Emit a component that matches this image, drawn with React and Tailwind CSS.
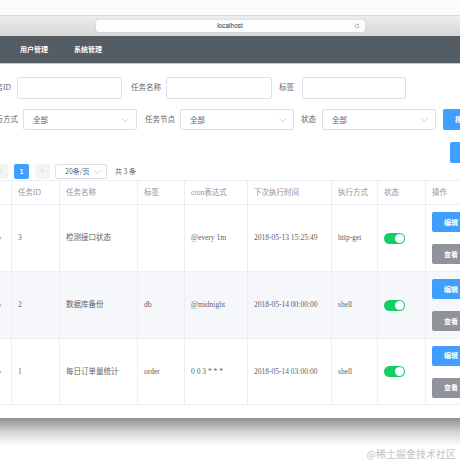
import React from 'react';

const serif = "font-['Liberation_Serif','Noto_Sans_CJK_SC',serif]";
const sans = "font-['Noto_Sans_CJK_SC','Liberation_Sans',sans-serif]";

const rows = [
    { id: '3', name: '检测接口状态', tag: '', cron: '@every 1m', next: '2018-05-13 15:25:49', mode: 'http-get' },
    { id: '2', name: '数据库备份', tag: 'db', cron: '@midnight', next: '2018-05-14 00:00:00', mode: 'shell' },
    { id: '1', name: '每日订单量统计', tag: 'order', cron: '0 0 3 * * *', next: '2018-05-14 03:00:00', mode: 'shell' },
];

function Chevron() {
    return (
        <svg width="7" height="4" viewBox="0 0 7 4" className="shrink-0">
            <path d="M0.5 0.5L3.5 3.5L6.5 0.5" fill="none" stroke="#c0c4cc" strokeWidth="0.8" />
        </svg>
    );
}

function Select({ className = '' }) {
    return (
        <div className={"h-[21px] w-[114px] border border-[#dcdfe6] rounded-[2px] bg-white flex items-center justify-between pl-[9px] pr-[7px] text-[#606266] " + className}>
            <span className={sans + " text-[7.5px]"}>全部</span>
            <Chevron />
        </div>
    );
}

function Cell({ w, children, className = '' }) {
    return (
        <div className={"shrink-0 h-full border-r border-[#ebeef5] flex items-center px-[6px] " + className} style={{ width: w }}>
            {children}
        </div>
    );
}

function Switch() {
    return (
        <div className="w-[21px] h-[11px] rounded-full bg-[#13ce66] flex items-center justify-end pr-[1px]">
            <div className="w-[9px] h-[9px] rounded-full bg-white" />
        </div>
    );
}

export default function App() {
    const cols = [24, 48, 78, 47, 63, 84, 46, 48, 80];

    return (
        <div className={"w-[460px] h-[460px] bg-white overflow-hidden " + serif}>
            {/* window top */}
            <div className="h-[15px] bg-[#fbfbfb]" />
            <div className="h-[21px] border-t border-[#d8d8d8] bg-gradient-to-b from-[#ededed] to-[#d7d7d7] flex items-start justify-center pt-[4px]">
                <div className="w-[269px] h-[12px] bg-[#fdfdfd] rounded-[2px] shadow-[0_0_1px_rgba(0,0,0,0.3)] relative flex items-center justify-center">
                    <span className="font-['Liberation_Sans',sans-serif] text-[6.5px] text-[#333] font-medium">localhost</span>
                    <svg width="6" height="6" viewBox="0 0 10 10" className="absolute right-[5px] top-[3px]">
                        <path d="M8 5a3 3 0 1 1-1-2.2" fill="none" stroke="#888" strokeWidth="1" />
                        <path d="M7.4 1.2v2h-2" fill="none" stroke="#888" strokeWidth="1" />
                    </svg>
                </div>
            </div>

            {/* page */}
            <div className="w-[460px] overflow-hidden">
                <div className="w-[560px] ml-[-12px]">
                    {/* nav */}
                    <div className="h-[28px] bg-[#545c64] border-b border-[#c8c8c8] flex items-center pl-[32px] gap-[26px]">
                        <span className={sans + " text-[7px] font-bold text-white"}>用户管理</span>
                        <span className={sans + " text-[7px] font-bold text-white"}>系统管理</span>
                    </div>

                    {/* filter form */}
                    <div className="pt-[13px] text-[7.5px] text-[#606266]">
                        <div className="flex items-center h-[22px]">
                            <span className="w-[23px]">任务ID</span>
                            <div className="ml-[6px] w-[105px] h-[22px] border border-[#dcdfe6] rounded-[2px]" />
                            <span className="ml-[9px]">任务名称</span>
                            <div className="ml-[5px] w-[106px] h-[22px] border border-[#dcdfe6] rounded-[2px]" />
                            <span className="ml-[7px]">标签</span>
                            <div className="ml-[8px] w-[104px] h-[22px] border border-[#dcdfe6] rounded-[2px]" />
                        </div>
                        <div className="flex items-center h-[21px] mt-[10px]">
                            <span className="w-[30px]">执行方式</span>
                            <Select className="ml-[5px]" />
                            <span className="ml-[8px]">任务节点</span>
                            <Select className="ml-[5px]" />
                            <span className="ml-[7px]">状态</span>
                            <Select className="ml-[6px]" />
                            <div className="ml-[7px] h-[21px] w-[38px] rounded-[2px] bg-[#409eff] flex items-center justify-center">
                                <span className={sans + " text-[7px] font-bold text-white"}>搜索</span>
                            </div>
                        </div>
                        <div className="flex h-[21px] mt-[12px]">
                            <div className="ml-[462px] w-[38px] h-[21px] rounded-[2px] bg-[#409eff] flex items-center justify-center">
                                <span className={sans + " text-[7px] font-bold text-white"}>新增</span>
                            </div>
                        </div>
                    </div>

                    {/* pagination */}
                    <div className="flex items-center h-[15px] mt-[1px] ml-[5px] text-[7.5px] text-[#606266]">
                        <div className="w-[15px] h-[15px] bg-[#f4f4f5] rounded-[2px] flex items-center justify-center text-[#c0c4cc] text-[6px]">&lt;</div>
                        <div className="ml-[6px] w-[15px] h-[15px] bg-[#409eff] rounded-[2px] flex items-center justify-center text-white text-[6.5px] font-bold font-['Liberation_Sans',sans-serif]">1</div>
                        <div className="ml-[6px] w-[15px] h-[15px] bg-[#f4f4f5] rounded-[2px] flex items-center justify-center text-[#c0c4cc] text-[6px]">&gt;</div>
                        <div className="ml-[5px] w-[52px] h-[15px] border border-[#dcdfe6] rounded-[2px] flex items-center justify-between pl-[9px] pr-[5px]">
                            <span className={sans + " text-[7px]"}>20条/页</span>
                            <Chevron />
                        </div>
                        <span className={sans + " ml-[8px] text-[7px]"}>共 3 条</span>
                    </div>

                    {/* table */}
                    <div className="mt-[1px] text-[7.5px]">
                        <div className="flex h-[25px] border-t border-b border-[#ebeef5] text-[#909399]">
                            <Cell w={cols[0]} />
                            <Cell w={cols[1]}>任务ID</Cell>
                            <Cell w={cols[2]}>任务名称</Cell>
                            <Cell w={cols[3]}>标签</Cell>
                            <Cell w={cols[4]}>cron表达式</Cell>
                            <Cell w={cols[5]}>下次执行时间</Cell>
                            <Cell w={cols[6]}>执行方式</Cell>
                            <Cell w={cols[7]}>状态</Cell>
                            <Cell w={cols[8]}>操作</Cell>
                        </div>
                        {rows.map((r, i) => (
                            <div
                                key={r.id}
                                className={"flex border-b border-[#ebeef5] text-[#606266] " + (i === 1 ? 'bg-[#f5f7fa] h-[67px]' : i === 0 ? 'bg-white h-[67px]' : 'bg-white h-[66px]')}
                            >
                                <Cell w={cols[0]} className="justify-center">
                                    <svg width="4" height="6" viewBox="0 0 4 6">
                                        <path d="M0.5 0.5L3.2 3L0.5 5.5" fill="none" stroke="#909399" strokeWidth="0.7" />
                                    </svg>
                                </Cell>
                                <Cell w={cols[1]}>{r.id}</Cell>
                                <Cell w={cols[2]}>{r.name}</Cell>
                                <Cell w={cols[3]}>{r.tag}</Cell>
                                <Cell w={cols[4]}>{r.cron}</Cell>
                                <Cell w={cols[5]} className="whitespace-nowrap">{r.next}</Cell>
                                <Cell w={cols[6]}>{r.mode}</Cell>
                                <Cell w={cols[7]}><Switch /></Cell>
                                <Cell w={cols[8]} className="flex-col items-start justify-center gap-[12px]">
                                    <div className="w-[38px] h-[20px] rounded-[2px] bg-[#409eff] flex items-center justify-center">
                                        <span className={sans + " text-[7px] font-bold text-white"}>编辑</span>
                                    </div>
                                    <div className="w-[38px] h-[20px] rounded-[2px] bg-[#909399] flex items-center justify-center">
                                        <span className={sans + " text-[7px] font-bold text-white"}>查看</span>
                                    </div>
                                </Cell>
                            </div>
                        ))}
                        <div className="h-[13px] bg-white" />
                    </div>
                </div>
            </div>

            {/* window shadow */}
            <div className="h-[28px] bg-gradient-to-b from-[#8f8f8f] via-[#d4d4d4] to-white" />
            <div className="flex justify-end pr-[4px] pt-[0px]">
                <span className={sans + " text-[10px] text-[#c3c3c3]"}>@稀土掘金技术社区</span>
            </div>
        </div>
    );
}
